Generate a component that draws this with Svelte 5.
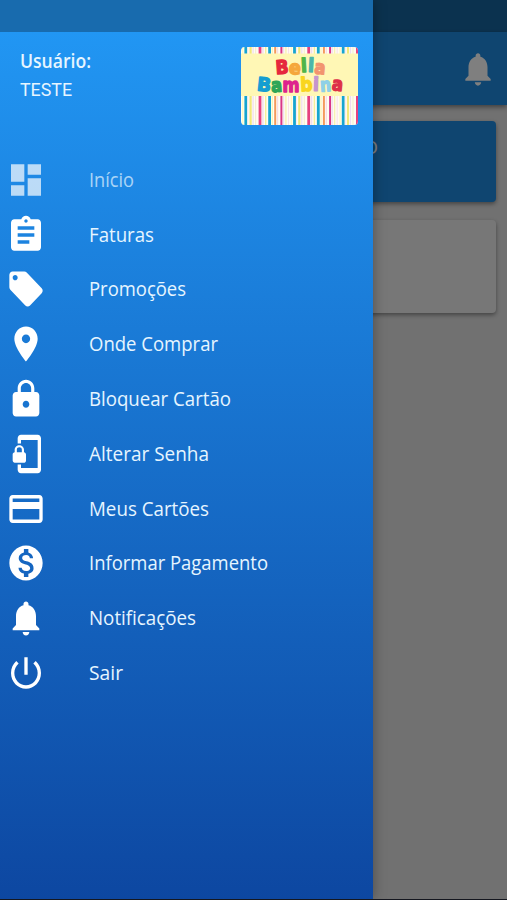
<script>
  const items = [
    { label: 'Início', w: 45, dim: true, d: 'M3 13h8V3H3v10zm0 8h8v-6H3v6zm10 0h8V11h-8v10zm0-18v6h8V3h-8z' },
    { label: 'Faturas', w: 65, d: 'M19 3h-4.18C14.4 1.84 13.3 1 12 1s-2.4.84-2.82 2H5c-1.1 0-2 .9-2 2v14c0 1.1.9 2 2 2h14c1.1 0 2-.9 2-2V5c0-1.1-.9-2-2-2zm-7 0c.55 0 1 .45 1 1s-.45 1-1 1-1-.45-1-1 .45-1 1-1zm2 14H7v-2h7v2zm3-4H7v-2h10v2zm0-4H7V7h10v2z' },
    { label: 'Promoções', w: 97, d: 'M21.41 11.58l-9-9C12.05 2.22 11.55 2 11 2H4c-1.1 0-2 .9-2 2v7c0 .55.22 1.05.59 1.42l9 9c.36.36.86.58 1.41.58s1.05-.22 1.41-.59l7-7c.37-.36.59-.86.59-1.41s-.23-1.06-.59-1.42zM5.5 7C4.67 7 4 6.33 4 5.5S4.67 4 5.5 4 7 4.67 7 5.5 6.33 7 5.5 7z' },
    { label: 'Onde Comprar', w: 129, d: 'M12 2C8.13 2 5 5.13 5 9c0 5.25 7 13 7 13s7-7.75 7-13c0-3.87-3.13-7-7-7zm0 9.5c-1.38 0-2.5-1.12-2.5-2.5s1.12-2.5 2.5-2.5 2.5 1.12 2.5 2.5-1.12 2.5-2.5 2.5z' },
    { label: 'Bloquear Cartão', w: 142, d: 'M18 8h-1V6c0-2.76-2.24-5-5-5S7 3.24 7 6v2H6c-1.1 0-2 .9-2 2v10c0 1.1.9 2 2 2h12c1.1 0 2-.9 2-2V10c0-1.1-.9-2-2-2zm-6 9c-1.1 0-2-.9-2-2s.9-2 2-2 2 .9 2 2-.9 2-2 2zm3.1-9H8.9V6c0-1.71 1.39-3.1 3.1-3.1s3.1 1.39 3.1 3.1v2z' },
    { label: 'Alterar Senha', w: 120, d: 'M19 1H9c-1.1 0-2 .9-2 2v3h2V4h10v16H9v-2H7v3c0 1.1.9 2 2 2h10c1.1 0 2-.9 2-2V3c0-1.1-.9-2-2-2zm-8.2 10V9.5C10.8 8.1 9.4 7 8 7S5.2 8.1 5.2 9.5V11c-.6 0-1.2.6-1.2 1.2v3.5c0 .7.6 1.3 1.2 1.3h5.5c.7 0 1.3-.6 1.3-1.2v-3.5c0-.7-.6-1.3-1.2-1.3zm-1.3 0h-3V9.5c0-.8.7-1.3 1.5-1.3s1.5.5 1.5 1.3V11z' },
    { label: 'Meus Cartões', w: 120, d: 'M20 4H4c-1.11 0-1.99.89-1.99 2L2 18c0 1.11.89 2 2 2h16c1.11 0 2-.89 2-2V6c0-1.11-.89-2-2-2zm0 14H4v-6h16v6zm0-10H4V6h16v2z' },
    { label: 'Informar Pagamento', w: 179, d: 'M12 2C6.48 2 2 6.48 2 12s4.48 10 10 10 10-4.48 10-10S17.52 2 12 2zm1.41 16.09V20h-2.67v-1.93c-1.71-.36-3.16-1.46-3.27-3.4h1.96c.1 1.05.82 1.87 2.65 1.87 1.96 0 2.4-.98 2.4-1.59 0-.83-.44-1.61-2.67-2.14-2.48-.6-4.18-1.62-4.18-3.67 0-1.72 1.39-2.84 3.11-3.21V4h2.67v1.95c1.86.45 2.79 1.86 2.85 3.39H14.3c-.05-1.11-.64-1.87-2.22-1.87-1.5 0-2.4.68-2.4 1.64 0 .84.65 1.39 2.67 1.91s4.18 1.39 4.18 3.91c-.01 1.83-1.38 2.83-3.12 3.16z' },
    { label: 'Notificações', w: 107, d: 'M12 22c1.1 0 2-.9 2-2h-4c0 1.1.89 2 2 2zm6-6v-5c0-3.07-1.64-5.64-4.5-6.32V4c0-.83-.67-1.5-1.5-1.5s-1.5.67-1.5 1.5v.68C7.63 5.36 6 7.92 6 11v5l-2 2v1h16v-1l-2-2z' },
    { label: 'Sair', w: 34, d: 'M13 3h-2v10h2V3zm4.83 2.17l-1.42 1.42C17.99 7.86 19 9.81 19 12c0 3.87-3.13 7-7 7s-7-3.13-7-7c0-2.19 1.01-4.14 2.58-5.42L6.17 5.17C4.23 6.82 3 9.26 3 12c0 4.97 4.03 9 9 9s9-4.03 9-9c0-2.74-1.23-5.18-3.17-6.83z' }
  ];
  const bell = items[8].d;
  const stripes = [
    [1, 1.4, '#fff9c4'], [3.4, 2.8, '#16a5cf'], [6.5, 0.8, '#fbe4e8'], [8.5, 2.2, '#f2e878'], [11.5, 1.2, '#efdcee'],
    [14, 1.2, '#f7eed0'], [17.6, 2.8, '#e6407f'], [21.2, 1.4, '#f0dcec'], [24, 1.4, '#f6ee9a'], [27.2, 2.8, '#16a5cf'],
    [30.8, 1, '#faf3a8'], [33.2, 2, '#f49a5c'], [36, 1.2, '#f8dbe5'], [39.4, 2, '#d93687'], [42, 1.2, '#efe0f0'],
    [44.2, 1.4, '#f8f1b4'], [47, 0.9, '#f9dde6']
  ];
  const all = [0, 48.7, 97.4].flatMap((o) => stripes.map(([x, w, c]) => [x + o, w, c]));
  const letters = [
    ['B', 34.5, 27, 13, '#e6283d', -4], ['e', 48, 27, 12, '#f5a73c', 4], ['l', 60, 25, 6, '#4fb548', -3],
    ['l', 67, 25, 6, '#4bb6aa', 3], ['a', 73.5, 27, 11, '#f2946f', 5],
    ['B', 16, 44, 14, '#159ed1', 6], ['a', 30, 45, 11, '#2ea557', -4], ['m', 41.5, 44.5, 17, '#de238d', 0],
    ['b', 59.5, 44, 12, '#f9d51e', -3], ['i', 72, 44, 6, '#c695ce', 2], ['n', 79, 44.5, 11, '#8fd0e7', -4],
    ['a', 91, 43.5, 11, '#de3049', 6]
  ];
</script>

{#snippet icon(d)}
  <svg class="icon" viewBox="0 0 24 24" preserveAspectRatio="none" aria-hidden="true"><path {d} /></svg>
{/snippet}

{#snippet label(t, w, cls = '')}
  <svg class="label {cls}" width={w} height="28"><text x="0" y="21" textLength={w} lengthAdjust="spacingAndGlyphs">{t}</text></svg>
{/snippet}

<div class="screen">
  <div class="page">
    <div class="status"></div>
    <header class="toolbar">{@render icon(bell)}</header>
    <main>
      <div class="card blue"><span>SALDO</span></div>
      <div class="card"></div>
    </main>
  </div>
  <div class="scrim"></div>
  <aside>
    <div class="status"></div>
    <div class="top">
      <div class="user">
        {@render label('Usuário:', 71, 'bold')}
        {@render label('TESTE', 52, 'name')}
      </div>
      <svg class="logo" width="117" height="78" viewBox="0 0 117 78">
        <rect width="117" height="78" fill="#fffdf2" />
        {#each all as [x, w, c]}<rect {x} y="0" width={w} height="78" fill={c} />{/each}
        <rect y="6.5" width="117" height="42.5" fill="#fff7b5" />
        {#each letters as [ch, x, y, w, c, r]}
          <text {x} {y} textLength={w} lengthAdjust="spacingAndGlyphs" fill={c} stroke={c} transform="rotate({r} {x + 5} {y - 6})">{ch}</text>
        {/each}
      </svg>
    </div>
    <nav>
      {#each items as it}
        <div class="item" class:dim={it.dim}>
          {@render icon(it.d)}
          {@render label(it.label, it.w)}
        </div>
      {/each}
    </nav>
  </aside>
  <div class="bottom"></div>
</div>

<style>
  .screen { position: relative; width: 507px; height: 900px; overflow: hidden; background: #e2e2e2; font-family: 'Open Sans', 'Noto Sans', sans-serif; }
  .page { display: flex; flex-direction: column; height: 100%; }
  .status { height: 32px; flex: none; background: #186bae; }
  .page .status { background: #17659f; }
  .toolbar { height: 73px; flex: none; display: flex; align-items: center; justify-content: flex-end; padding-right: 10.5px; box-sizing: border-box; background: #1f8be0; box-shadow: 0 2px 5px rgba(0, 0, 0, .45); }
  .icon { display: block; width: 40px; height: 42px; fill: currentColor; flex: none; }
  .toolbar .icon { color: #fff; width: 38px; height: 40px; }
  main { display: flex; flex-direction: column; gap: 18px; padding: 16px 11px; }
  .card { height: 93px; border-radius: 4px; background: #efefef; box-shadow: 0 2px 4px rgba(0, 0, 0, .4); }
  .card.blue { height: 81px; background: #1f8be0; color: #fff; font-size: 19px; }
  .card span { display: block; width: 367px; padding-top: 13px; text-align: right; }
  .scrim { position: absolute; inset: 0; background: rgba(0, 0, 0, .5); }
  aside { position: absolute; left: 0; top: 0; width: 372.5px; height: 899px; display: flex; flex-direction: column; background: linear-gradient(#2196f3 32px, #0d47a1); box-shadow: 0 0 12px rgba(0, 0, 0, .35); color: #fff; }
  .top { display: flex; justify-content: space-between; height: 120.5px; flex: none; padding: 14.5px 14.5px 0 19.5px; box-sizing: border-box; }
  .user { display: flex; flex-direction: column; }
  .label { display: block; overflow: visible; fill: #e6f5ff; font-size: 20.5px; }
  .bold { font-size: 20px; font-weight: 600; }
  .name { font-family: Roboto, sans-serif; font-size: 17.5px; }
  .logo { display: block; border-radius: 4px; }
  .logo text { font: 900 19px 'DejaVu Sans', sans-serif; stroke-width: 1.4px; stroke-linejoin: round; }
  nav { display: flex; flex-direction: column; }
  .item { height: 54.8px; display: flex; align-items: center; gap: 42.5px; padding-left: 6.3px; }
  .dim { opacity: .7; }
  .bottom { position: absolute; left: 0; right: 0; bottom: 0; height: 1px; background: #15171f; }
</style>
